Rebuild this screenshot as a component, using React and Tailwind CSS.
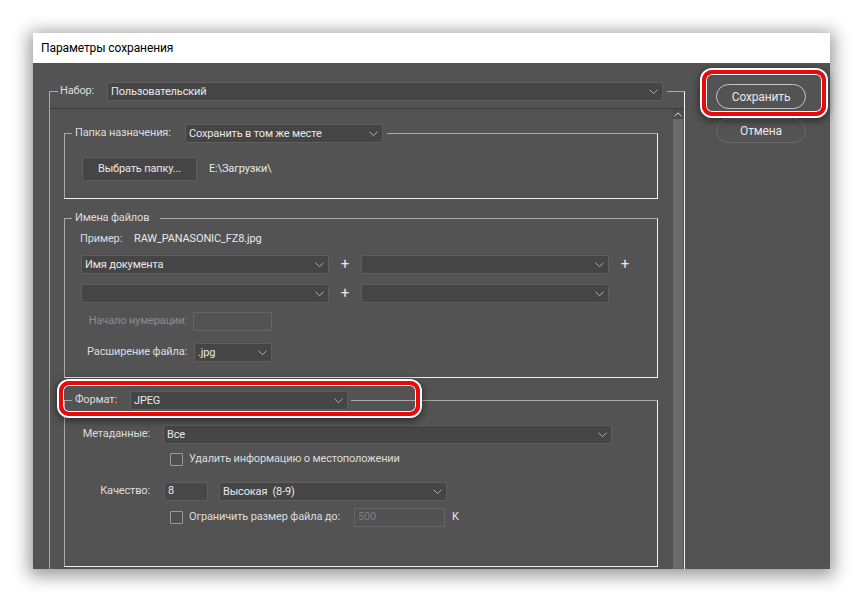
import React from "react";

const Chevron = ({ color = "#b4b4b4" }) => (
  <svg width="9" height="6" viewBox="0 0 9 6" className="shrink-0">
    <polyline points="0.5,0.8 4.5,4.6 8.5,0.8" fill="none" stroke={color} strokeWidth="1" />
  </svg>
);

const Select = ({ value = "", className = "" }) => (
  <div
    className={`flex items-center justify-between h-[19px] pl-[3px] pr-[4px] bg-[#454545] border border-[#5e5e5e] rounded-[2px] text-[#e8e8e8] ${className}`}
  >
    <span className="leading-none whitespace-pre">{value}</span>
    <Chevron />
  </div>
);

const Checkbox = () => (
  <div className="w-[13px] h-[13px] border border-[#9a9a9a] bg-[#4f4f4f] rounded-[1px] shrink-0" />
);

const Group = ({ legend, className = "", children }) => (
  <fieldset
    className={`w-[594px] border border-t-[#a8a8a8] border-l-[#a8a8a8] border-r-[#f2f2f2] border-b-[#f2f2f2] ${className}`}
  >
    {legend}
    {children}
  </fieldset>
);

const Highlight = ({ className }) => (
  <div
    className={`absolute border-[4px] border-[#ea0a0a] rounded-[10px] shadow-[0_0_0_2px_#ffffff,inset_0_0_0_1px_#ffffff,0_2px_7px_3px_rgba(0,0,0,0.45)] ${className}`}
  />
);

export default function App() {
  return (
    <div className="relative w-[863px] h-[602px] bg-white pt-[33px] pl-[33px] font-['Roboto',sans-serif] text-[11px] tracking-[-0.15px] whitespace-nowrap overflow-hidden">
      <div className="w-[797px] h-[536px] flex flex-col shadow-[0_3px_16px_4px_rgba(0,0,0,0.4)]">
        {/* title bar */}
        <div className="h-[30px] bg-white flex items-center pl-[8px] text-[12px] tracking-[-0.1px] text-black">
          Параметры сохранения
        </div>

        {/* body */}
        <div className="flex-1 bg-[#535353] flex pt-[19px] pl-[16px] overflow-hidden">
          <fieldset className="w-[636px] h-[520px] shrink-0 border border-t-[#a8a8a8] border-l-[#a8a8a8] border-r-[#f2f2f2] border-b-[#f2f2f2]">
            <legend className="ml-[8px] pl-[2px] pr-[4px]">
              <div className="flex items-center h-[19px]">
                <span className="w-[47px] text-[#dcdcdc]">Набор:</span>
                <Select value="Пользовательский" className="w-[556px]" />
              </div>
            </legend>

            <div className="mt-[7px] flex border-t border-[#3c3c3c] h-[470px]">
              {/* scroll content */}
              <div className="flex-1 pl-[14px] pt-[15px]">
                <Group
                  legend={
                    <legend className="ml-[7px] pl-[3px] pr-[4px]">
                      <div className="flex items-center h-[19px]">
                        <span className="w-[110px] text-[#dcdcdc]">Папка назначения:</span>
                        <Select value="Сохранить в том же месте" className="w-[198px]" />
                      </div>
                    </legend>
                  }
                >
                  <div className="flex items-center mt-[14px] mb-[17px] pl-[17px]">
                    <div className="h-[24px] w-[115px] flex items-center justify-center bg-[#454545] border border-[#5e5e5e] rounded-[2px] text-[#e8e8e8]">
                      Выбрать папку...
                    </div>
                    <span className="ml-[12px] text-[#e8e8e8]">E:\Загрузки\</span>
                  </div>
                </Group>

                <Group
                  className="mt-[11px]"
                  legend={
                    <legend className="ml-[7px] pl-[3px] pr-[11px] h-[16px] leading-[16px] text-[#dcdcdc]">
                      Имена файлов
                    </legend>
                  }
                >
                  <div className="mt-[5px] h-[16px] flex items-center pl-[15px] text-[#dcdcdc]">
                    <span className="w-[54px]">Пример:</span>
                    <span className="text-[#e8e8e8]">RAW_PANASONIC_FZ8.jpg</span>
                  </div>
                  <div className="mt-[8px] flex items-center pl-[16px]">
                    <Select value="Имя документа" className="w-[248px]" />
                    <span className="w-[32px] text-center text-[15px] leading-none text-[#e8e8e8]">+</span>
                    <Select className="w-[248px]" />
                    <span className="w-[32px] text-center text-[15px] leading-none text-[#e8e8e8]">+</span>
                  </div>
                  <div className="mt-[10px] flex items-center pl-[16px]">
                    <Select className="w-[248px]" />
                    <span className="w-[32px] text-center text-[15px] leading-none text-[#e8e8e8]">+</span>
                    <Select className="w-[248px]" />
                  </div>
                  <div className="mt-[9px] flex items-center">
                    <span className="w-[122px] text-right text-[#8c8c8c]">Начало нумерации:</span>
                    <div className="ml-[6px] w-[79px] h-[19px] border border-[#666666] bg-[#535353] rounded-[1px]" />
                  </div>
                  <div className="mt-[12px] mb-[15px] flex items-center">
                    <span className="w-[122px] text-right text-[#dcdcdc]">Расширение файла:</span>
                    <Select value=".jpg" className="ml-[7px] w-[78px]" />
                  </div>
                </Group>

                <Group
                  className="mt-[13px]"
                  legend={
                    <legend className="ml-[7px] pl-[3px] pr-[3px]">
                      <div className="flex items-center h-[19px]">
                        <span className="w-[55px] text-[#dcdcdc]">Формат:</span>
                        <Select value="JPEG" className="w-[218px]" />
                      </div>
                    </legend>
                  }
                >
                  <div className="mt-[15px] flex items-center">
                    <span className="w-[85px] text-right text-[#dcdcdc]">Метаданные:</span>
                    <Select value="Все" className="ml-[13px] w-[449px]" />
                  </div>
                  <div className="mt-[8px] h-[14px] flex items-center pl-[105px]">
                    <Checkbox />
                    <span className="ml-[6px] text-[#dcdcdc]">Удалить информацию о местоположении</span>
                  </div>
                  <div className="mt-[16px] flex items-center">
                    <span className="w-[85px] text-right text-[#dcdcdc]">Качество:</span>
                    <div className="ml-[14px] w-[44px] h-[19px] flex items-center pl-[3px] bg-[#474747] border border-[#5e5e5e] rounded-[1px] text-[#e8e8e8]">
                      8
                    </div>
                    <Select value="Высокая  (8-9)" className="ml-[11px] w-[228px]" />
                  </div>
                  <div className="mt-[7px] mb-[39px] h-[19px] flex items-center pl-[105px]">
                    <Checkbox />
                    <span className="ml-[6px] w-[165px] text-[#dcdcdc]">Ограничить размер файла до:</span>
                    <div className="w-[91px] h-[19px] flex items-center pl-[3px] bg-[#525252] border border-[#666666] rounded-[1px] text-[#7c7c7c]">
                      500
                    </div>
                    <span className="ml-[7px] text-[#e8e8e8]">K</span>
                  </div>
                </Group>
              </div>

              {/* scrollbar */}
              <div className="w-[10px] mr-[1px] bg-[#6b6b6b] flex flex-col">
                <div className="h-[10px] bg-[#4b4b4b] flex items-center justify-center">
                  <svg width="8" height="5" viewBox="0 0 8 5">
                    <polyline points="0.5,4.2 4,0.8 7.5,4.2" fill="none" stroke="#e6e6e6" strokeWidth="1" />
                  </svg>
                </div>
              </div>
            </div>
          </fieldset>

          {/* buttons */}
          <div className="ml-[31px] mt-[2px] flex flex-col gap-[9px]">
            <div className="w-[90px] h-[25px] rounded-full border border-[#c4c4c4] flex items-center justify-center text-[12px] text-[#e8e8e8]">
              Сохранить
            </div>
            <div className="w-[90px] h-[25px] rounded-full border border-[#6a6a6a] flex items-center justify-center text-[12px] text-[#e8e8e8]">
              Отмена
            </div>
          </div>
        </div>
      </div>

      <Highlight className="left-[702px] top-[70px] w-[124px] h-[46px]" />
      <Highlight className="left-[59px] top-[381px] w-[361px] h-[35px]" />
    </div>
  );
}
